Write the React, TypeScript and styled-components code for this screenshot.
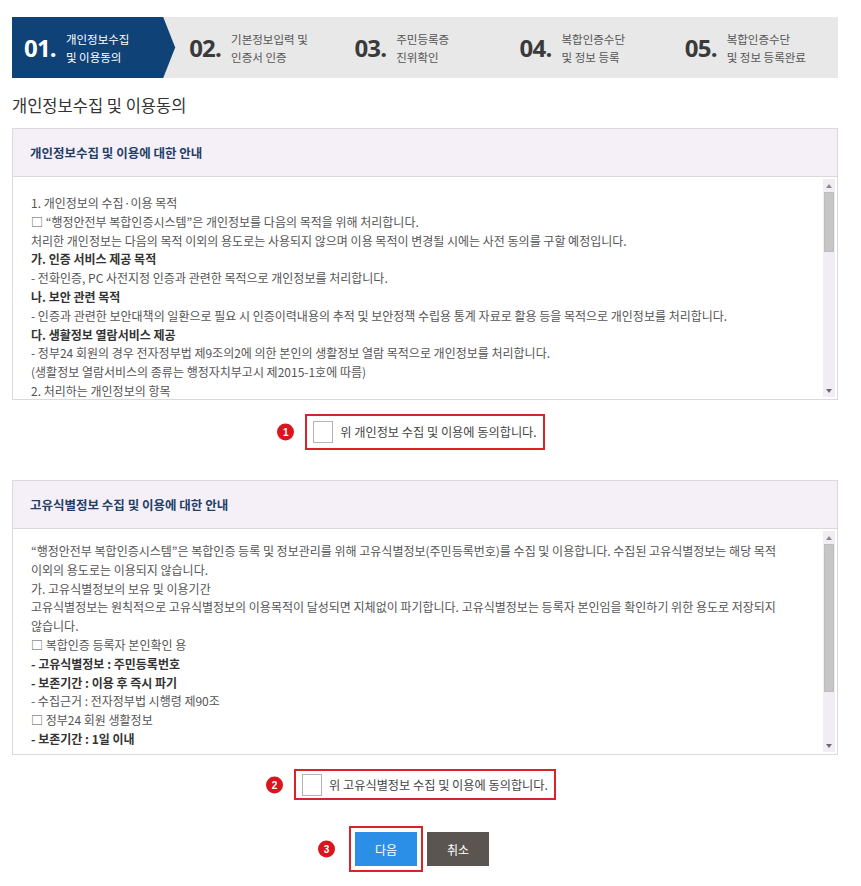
import React from 'react';
import styled, { createGlobalStyle, css } from 'styled-components';

const GlobalStyle = createGlobalStyle`
  html, body {
    margin: 0;
    padding: 0;
    background: #fff;
  }
  body {
    font-family: "Noto Sans CJK KR", "Noto Sans", sans-serif;
    color: #555;
  }
  * {
    box-sizing: border-box;
  }
`;

type Line = { text: string; bold?: boolean };

const STEPS = [
  { num: '01.', label: ['개인정보수집', '및 이용동의'] },
  { num: '02.', label: ['기본정보입력 및', '인증서 인증'] },
  { num: '03.', label: ['주민등록증', '진위확인'] },
  { num: '04.', label: ['복합인증수단', '및 정보 등록'] },
  { num: '05.', label: ['복합인증수단', '및 정보 등록완료'] },
];

const PRIVACY: Line[] = [
  { text: '1. 개인정보의 수집·이용 목적' },
  { text: '□ “행정안전부 복합인증시스템”은 개인정보를 다음의 목적을 위해 처리합니다.' },
  { text: '처리한 개인정보는 다음의 목적 이외의 용도로는 사용되지 않으며 이용 목적이 변경될 시에는 사전 동의를 구할 예정입니다.' },
  { text: '가. 인증 서비스 제공 목적', bold: true },
  { text: '- 전화인증, PC 사전지정 인증과 관련한 목적으로 개인정보를 처리합니다.' },
  { text: '나. 보안 관련 목적', bold: true },
  { text: '- 인증과 관련한 보안대책의 일환으로 필요 시 인증이력내용의 추적 및 보안정책 수립용 통계 자료로 활용 등을 목적으로 개인정보를 처리합니다.' },
  { text: '다. 생활정보 열람서비스 제공', bold: true },
  { text: '- 정부24 회원의 경우 전자정부법 제9조의2에 의한 본인의 생활정보 열람 목적으로 개인정보를 처리합니다.' },
  { text: '(생활정보 열람서비스의 종류는 행정자치부고시 제2015-1호에 따름)' },
  { text: '2. 처리하는 개인정보의 항목' },
  { text: '- 필수항목 : 성명, 생년월일, 성별, 내/외국인 구분, 휴대전화번호, 이동통신사, 연계정보(CI), 중복가입확인정보(DI)' },
  { text: '- 선택항목 : 이메일 주소' },
  { text: '- 자동수집항목 : 접속 IP 정보, 접속 로그, 서비스 이용기록' },
  { text: '3. 개인정보의 처리 및 보유기간' },
  { text: '□ 복합인증 서비스 이용자 개인정보' },
  { text: '- 보유기간 : 회원 탈퇴 시 또는 복합인증수단 해지 시까지', bold: true },
  { text: '- 수집근거 : 전자정부법 제9조, 개인정보 보호법 제15조' },
  { text: '□ 인증 이력 정보' },
  { text: '- 보유기간 : 1년', bold: true },
  { text: '- 수집근거 : 전자서명법 시행령 제2조' },
  { text: '□ 정부24 회원 생활정보' },
  { text: '- 보유기간 : 1일 이내', bold: true },
  { text: '- 수집근거 : 전자정부법 제9조의2' },
  { text: '4. 개인정보의 제3자 제공' },
  { text: '- “행정안전부 복합인증시스템”은 정보주체의 개인정보를 제1항에서 명시한 범위 내에서만 처리합니다.' },
  { text: '- 정보주체의 동의, 법률의 특별한 규정 등 개인정보 보호법 제17조 및 제18조에 해당하는 경우에만 제3자에게 제공합니다.' },
  { text: '5. 개인정보 처리의 위탁' },
  { text: '- 원활한 서비스 제공을 위하여 본인확인기관에 휴대전화 본인확인 업무를 위탁하고 있습니다.' },
  { text: '6. 동의를 거부할 권리 및 동의 거부에 따른 불이익' },
  { text: '- 귀하는 개인정보 수집·이용에 대한 동의를 거부할 권리가 있습니다.' },
  { text: '- 다만, 동의를 거부할 경우 복합인증수단 등록 및 인증 서비스 이용이 제한됩니다.' },
  { text: '7. 개인정보의 파기' },
  { text: '- 보유기간이 경과하거나 처리목적이 달성된 개인정보는 지체없이 파기합니다.' },
  { text: '8. 정보주체의 권리·의무 및 행사방법' },
  { text: '- 정보주체는 언제든지 개인정보 열람, 정정, 삭제, 처리정지 요구 등의 권리를 행사할 수 있습니다.' },
];

const UNIQUE_ID: Line[] = [
  { text: '“행정안전부 복합인증시스템”은 복합인증 등록 및 정보관리를 위해 고유식별정보(주민등록번호)를 수집 및 이용합니다. 수집된 고유식별정보는 해당 목적 이외의 용도로는 이용되지 않습니다.' },
  { text: '가. 고유식별정보의 보유 및 이용기간' },
  { text: '고유식별정보는 원칙적으로 고유식별정보의 이용목적이 달성되면 지체없이 파기합니다. 고유식별정보는 등록자 본인임을 확인하기 위한 용도로 저장되지 않습니다.' },
  { text: '□ 복합인증 등록자 본인확인 용' },
  { text: '- 고유식별정보 : 주민등록번호', bold: true },
  { text: '- 보존기간 : 이용 후 즉시 파기', bold: true },
  { text: '- 수집근거 : 전자정부법 시행령 제90조' },
  { text: '□ 정부24 회원 생활정보' },
  { text: '- 보존기간 : 1일 이내', bold: true },
  { text: '- 수집근거 : 전자정부법 제9조의2' },
  { text: '나. 동의를 거부할 권리 및 동의 거부에 따른 불이익' },
  { text: '- 귀하는 고유식별정보 수집·이용에 대한 동의를 거부할 권리가 있습니다.' },
  { text: '- 다만, 동의를 거부할 경우 복합인증수단 등록이 제한됩니다.' },
];

const Page = styled.div`
  width: 826px;
  margin-left: 12px;
  padding: 17px 0 20px;
`;

const StepBar = styled.ol`
  list-style: none;
  margin: 0;
  padding: 0;
  display: grid;
  grid-template-columns: repeat(5, 1fr);
  height: 61px;
  background: #e8e8e8;
`;

const Step = styled.li<{ $active?: boolean }>`
  display: flex;
  align-items: center;
  gap: 10px;
  padding-left: 12px;
  ${({ $active }) =>
    $active &&
    css`
      background: #0f4276;
      clip-path: polygon(
        0 0,
        calc(100% - 14px) 0,
        calc(100% - 2px) 50%,
        calc(100% - 14px) 100%,
        0 100%
      );
    `}
`;

const StepNum = styled.span<{ $active?: boolean }>`
  font-family: "Open Sans", "Liberation Sans", sans-serif;
  font-weight: 700;
  font-size: 24px;
  letter-spacing: -0.8px;
  line-height: 1;
  color: ${({ $active }) => ($active ? '#fff' : '#3a3a3a')};
`;

const StepLabel = styled.span<{ $active?: boolean }>`
  display: flex;
  flex-direction: column;
  font-size: 11.5px;
  line-height: 18px;
  color: ${({ $active }) => ($active ? '#fff' : '#555')};
`;

const Title = styled.h2`
  margin: 16px 0 12px;
  font-size: 16.5px;
  font-weight: 400;
  line-height: 22px;
  color: #333;
`;

const Box = styled.section<{ $top?: number }>`
  margin-top: ${({ $top }) => $top ?? 0}px;
  border: 1px solid #dadada;
`;

const BoxHeader = styled.h3`
  margin: 0;
  height: 48px;
  display: flex;
  align-items: center;
  padding-left: 17px;
  background: #f5f0f8;
  border-bottom: 1px solid #dadada;
  font-size: 12.5px;
  font-weight: 700;
  color: #233f66;
`;

const BoxBody = styled.div<{ $height: number }>`
  display: flex;
  height: ${({ $height }) => $height}px;
  padding: 2px;
`;

const Scroll = styled.div<{ $padTop: number }>`
  flex: 1;
  min-width: 0;
  overflow-y: auto;
  scrollbar-width: none;
  padding: ${({ $padTop }) => $padTop}px 24px 12px 16px;
`;

const Rail = styled.div`
  flex: none;
  width: 12px;
  display: flex;
  flex-direction: column;
  background: #f2edf5;
`;

const RailArrow = styled.span<{ $down?: boolean }>`
  flex: none;
  height: 13px;
  display: flex;
  align-items: center;
  justify-content: center;

  &::before {
    content: '';
    border-left: 3.5px solid transparent;
    border-right: 3.5px solid transparent;
    ${({ $down }) =>
      $down
        ? css`
            border-top: 4px solid #6c6c6c;
          `
        : css`
            border-bottom: 4px solid #8a8a8a;
          `}
  }
`;

const RailTrack = styled.div`
  flex: 1;
`;

const RailThumb = styled.div<{ $size: number }>`
  height: ${({ $size }) => $size}px;
  margin: 0 1px;
  background: #c6c6c6;
  border: 1px solid #bdbdbd;
`;

const Para = styled.p<{ $bold?: boolean }>`
  margin: 0;
  font-size: 12px;
  line-height: 18.8px;
  word-break: keep-all;
  color: ${({ $bold }) => ($bold ? '#333' : '#555')};
  font-weight: ${({ $bold }) => ($bold ? 700 : 400)};
`;

const AgreeRow = styled.div`
  display: flex;
  justify-content: center;
  margin-top: 14px;
`;

const AgreeBox = styled.label<{ $height: number }>`
  position: relative;
  display: flex;
  align-items: center;
  gap: 7px;
  height: ${({ $height }) => $height}px;
  padding: 0 6px;
  border: 2px solid #d9232b;
  font-size: 12.2px;
  color: #444;
  cursor: pointer;
`;

const Check = styled.input.attrs({ type: 'checkbox' })`
  appearance: none;
  margin: 0;
  width: 20px;
  height: 22px;
  border: 1px solid #b4b4b4;
  background: #fff;
`;

const Badge = styled.span<{ $gap: number }>`
  position: absolute;
  top: 50%;
  right: calc(100% + ${({ $gap }) => $gap}px);
  transform: translateY(-50%);
  width: 17px;
  height: 17px;
  border-radius: 50%;
  background: #d9151d;
  color: #fff;
  font-family: "Liberation Sans", sans-serif;
  font-size: 10px;
  font-weight: 700;
  display: flex;
  align-items: center;
  justify-content: center;
`;

const ButtonRow = styled.div`
  display: flex;
  justify-content: center;
  gap: 10px;
  margin-top: 32px;
  padding-right: 6px;
`;

const Button = styled.button<{ $primary?: boolean }>`
  position: relative;
  width: 62px;
  height: 34px;
  border: 0;
  padding: 0;
  font-family: "Noto Sans CJK KR", sans-serif;
  font-size: 12px;
  color: #fff;
  background: ${({ $primary }) => ($primary ? '#2b8fe8' : '#5a5550')};
  ${({ $primary }) =>
    $primary &&
    css`
      outline: 2px solid #d9232b;
      outline-offset: 4px;
    `}
`;

const Terms = ({
  title,
  lines,
  height,
  padTop,
  thumb,
  top,
}: {
  title: string;
  lines: Line[];
  height: number;
  padTop: number;
  thumb: number;
  top?: number;
}) => (
  <Box $top={top}>
    <BoxHeader>{title}</BoxHeader>
    <BoxBody $height={height}>
      <Scroll $padTop={padTop}>
        {lines.map((l, i) => (
          <Para key={i} $bold={l.bold}>
            {l.text}
          </Para>
        ))}
      </Scroll>
      <Rail>
        <RailArrow />
        <RailTrack>
          <RailThumb $size={thumb} />
        </RailTrack>
        <RailArrow $down />
      </Rail>
    </BoxBody>
  </Box>
);

export default function App() {
  return (
    <>
      <GlobalStyle />
      <Page>
        <StepBar>
          {STEPS.map((s, i) => (
            <Step key={s.num} $active={i === 0}>
              <StepNum $active={i === 0}>{s.num}</StepNum>
              <StepLabel $active={i === 0}>
                <span>{s.label[0]}</span>
                <span>{s.label[1]}</span>
              </StepLabel>
            </Step>
          ))}
        </StepBar>

        <Title>개인정보수집 및 이용동의</Title>

        <Terms
          title="개인정보수집 및 이용에 대한 안내"
          lines={PRIVACY}
          height={222}
          padTop={15}
          thumb={60}
        />
        <AgreeRow>
          <AgreeBox $height={36}>
            <Badge $gap={13}>1</Badge>
            <Check />
            위 개인정보 수집 및 이용에 동의합니다.
          </AgreeBox>
        </AgreeRow>

        <Terms
          title="고유식별정보 수집 및 이용에 대한 안내"
          lines={UNIQUE_ID}
          height={225}
          padTop={11}
          thumb={148}
          top={30}
        />
        <AgreeRow>
          <AgreeBox $height={31}>
            <Badge $gap={13}>2</Badge>
            <Check />
            위 고유식별정보 수집 및 이용에 동의합니다.
          </AgreeBox>
        </AgreeRow>

        <ButtonRow>
          <Button $primary>
            <Badge $gap={20}>3</Badge>
            다음
          </Button>
          <Button>취소</Button>
        </ButtonRow>
      </Page>
    </>
  );
}
